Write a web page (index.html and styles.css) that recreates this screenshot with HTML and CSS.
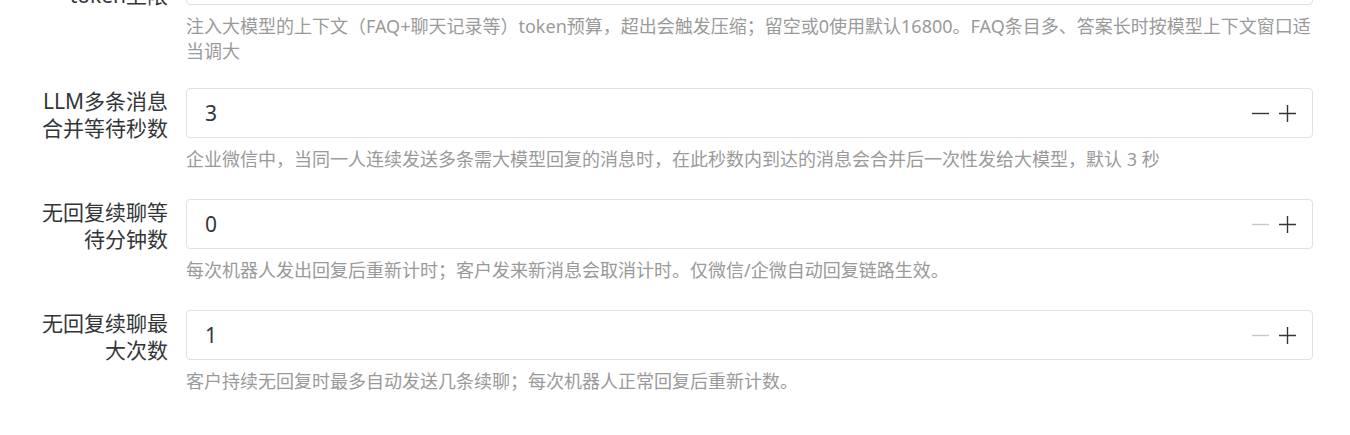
FILE: index.html
```html
<!DOCTYPE html>
<html lang="zh-CN">
<head>
<meta charset="utf-8">
<title>设置</title>
<link rel="stylesheet" href="styles.css">
</head>
<body>
<div class="form">
  <div class="item item--multi">
    <label class="label">大模型上下文token上限</label>
    <div class="number">
      <span class="value">16800</span>
      <span class="btns">
        <svg class="ic" viewBox="0 0 17 17"><path d="M0 8.5H17"/></svg>
        <svg class="ic" viewBox="0 0 17 17"><path d="M0 8.5H17M8.5 0V17"/></svg>
      </span>
    </div>
    <div class="help">注入大模型的上下文（FAQ+聊天记录等）token预算，超出会触发压缩；留空或0使用默认16800。FAQ条目多、答案长时按模型上下文窗口适当调大</div>
  </div>

  <div class="item">
    <label class="label">LLM多条消息合并等待秒数</label>
    <div class="number">
      <span class="value">3</span>
      <span class="btns">
        <svg class="ic" viewBox="0 0 17 17"><path d="M0 8.5H17"/></svg>
        <svg class="ic" viewBox="0 0 17 17"><path d="M0 8.5H17M8.5 0V17"/></svg>
      </span>
    </div>
    <div class="help">企业微信中，当同一人连续发送多条需大模型回复的消息时，在此秒数内到达的消息会合并后一次性发给大模型，默认 3 秒</div>
  </div>

  <div class="item">
    <label class="label">无回复续聊等待分钟数</label>
    <div class="number">
      <span class="value">0</span>
      <span class="btns">
        <svg class="ic ic--off" viewBox="0 0 17 17"><path d="M0 8.5H17"/></svg>
        <svg class="ic" viewBox="0 0 17 17"><path d="M0 8.5H17M8.5 0V17"/></svg>
      </span>
    </div>
    <div class="help">每次机器人发出回复后重新计时；客户发来新消息会取消计时。仅微信/企微自动回复链路生效。</div>
  </div>

  <div class="item">
    <label class="label">无回复续聊最大次数</label>
    <div class="number">
      <span class="value">1</span>
      <span class="btns">
        <svg class="ic ic--off" viewBox="0 0 17 17"><path d="M0 8.5H17"/></svg>
        <svg class="ic" viewBox="0 0 17 17"><path d="M0 8.5H17M8.5 0V17"/></svg>
      </span>
    </div>
    <div class="help">客户持续无回复时最多自动发送几条续聊；每次机器人正常回复后重新计数。</div>
  </div>
</div>
</body>
</html>
```
FILE: styles.css
```css
html, body {
  margin: 0;
  padding: 0;
  background: #ffffff;
}

body {
  font-family: "Noto Sans", "Noto Sans CJK SC", sans-serif;
  color: #333639;
  overflow: hidden;
}

.form {
  margin-top: -45px;
  padding: 0 37px 0 38px;
}

.item {
  display: grid;
  grid-template-columns: 130px 1fr;
  column-gap: 18px;
  margin-bottom: 27px;
}

.item--multi {
  margin-bottom: 24px;
}

.label {
  grid-column: 1;
  grid-row: 1 / span 2;
  align-self: start;
  text-align: right;
  font-size: 21px;
  line-height: 27px;
  color: #333639;
}

.number {
  grid-column: 2;
  grid-row: 1;
  box-sizing: border-box;
  height: 50px;
  border: 1px solid #e0e0e6;
  border-radius: 4px;
  display: flex;
  align-items: center;
  padding: 0 16px 0 18px;
}

.value {
  flex: 1;
  font-size: 21px;
  line-height: 27px;
  color: #333639;
}

.btns {
  display: flex;
  align-items: center;
  gap: 10px;
}

.ic {
  width: 17px;
  height: 17px;
  display: block;
  fill: none;
  stroke: #333639;
  stroke-width: 1.4;
}

.ic--off {
  stroke: #c8c8cc;
}

.help {
  grid-column: 2;
  grid-row: 2;
  padding-top: 9px;
  font-size: 18px;
  line-height: 25px;
  color: #9a9a9a;
}
```
